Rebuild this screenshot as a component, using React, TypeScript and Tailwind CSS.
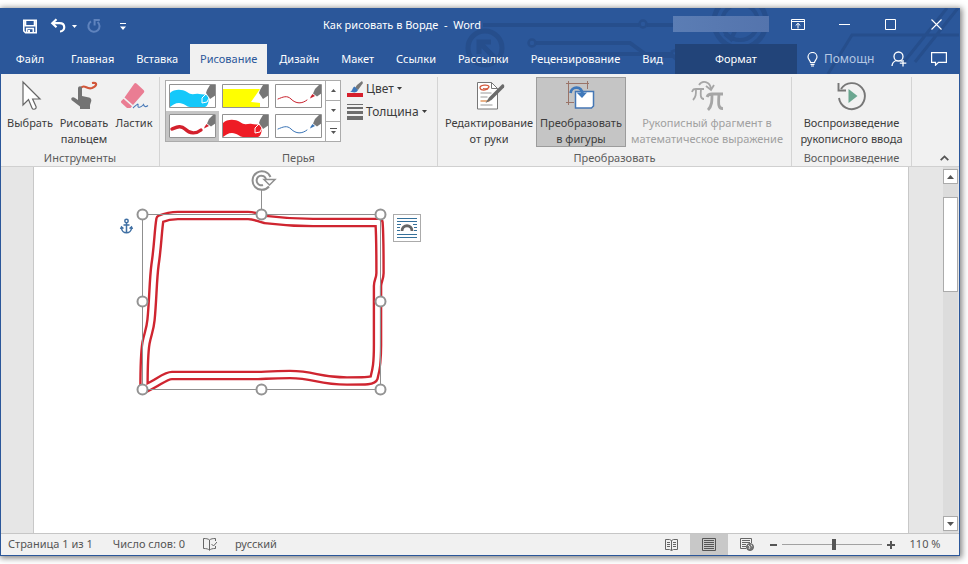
import React, { FC, ReactNode } from "react";

const tabsBefore = ["Главная", "Вставка"];
const tabsAfter = ["Дизайн", "Макет", "Ссылки", "Рассылки", "Рецензирование", "Вид"];

const HeaderArt = () => (
  <svg
    className="pointer-events-none absolute right-0 top-0 h-[66px] w-[500px]"
    viewBox="460 8 500 66"
    fill="none"
    stroke="#264e8c"
    strokeWidth="4"
    aria-hidden="true"
  >
    <path d="M484 25H640M648 25h40M537 43h94l18 13h24M580 54h92l22 20" />
    <circle cx="533" cy="43" r="3.5" strokeWidth="2.5" />
    <circle cx="644" cy="24" r="3.5" strokeWidth="2.5" />
    <circle cx="486" cy="48" r="17" strokeWidth="5" />
    <path d="M480 54V42h12M481 43l15 15" strokeWidth="5" />
    <circle cx="741" cy="22" r="26" strokeWidth="5" />
    <circle cx="741" cy="22" r="18" />
    <path d="M726 34l6 5 4-8" />
    <path d="M672 52c8-4 14 0 18 8l14 14M829 74l24-39h107M905 62l43-54M916 62l43-54" strokeWidth="3" />
  </svg>
);

const Caret = ({ className = "" }: { className?: string }) => (
  <svg className={`h-[3px] w-[5px] shrink-0 ${className}`} viewBox="0 0 5 3" fill="currentColor">
    <path d="M0 0h5L2.5 3z" />
  </svg>
);

const TitleBar: FC = () => (
  <div className="relative flex h-9 shrink-0 items-center text-white">
    <div className="flex w-[130px] shrink-0 items-center pl-[21px]">
      <button aria-label="Сохранить">
        <svg className="size-4" viewBox="0 0 16 16" fill="none" stroke="#fff" strokeWidth="1.6">
          <path d="M1.8 2.3h12.4v12.4H3.5l-1.7-1.7zM3.5 2.5v5.3h9V2.5M4.7 14.5v-4h6.6v4" />
          <path d="M6 12h2v2.5H6z" fill="#fff" stroke="none" />
        </svg>
      </button>
      <button aria-label="Отменить" className="ml-3 flex items-center gap-[6px]">
        <svg className="size-4" viewBox="0 0 16 16" fill="none" stroke="#fff" strokeWidth="2.2">
          <path d="M6.5 1.2 2.3 5.2l4.2 4M2.5 5.2h7c6.5 0 6 8 .5 8.3" />
        </svg>
        <Caret />
      </button>
      <button aria-label="Повторить" className="ml-[9px] text-[#5f83bd]">
        <svg className="size-4" viewBox="0 0 16 16" fill="none" stroke="currentColor" strokeWidth="2">
          <path d="M5 3.4a5.6 5.6 0 1 0 6.6.5M8.6 7.5V2h5.2" />
        </svg>
      </button>
      <button aria-label="Настройка панели" className="ml-[18px]">
        <svg className="h-[7px] w-[6px]" viewBox="0 0 6 7" fill="#fff">
          <path d="M0 0h6v1H0zM0 3.5h6L3 7z" />
        </svg>
      </button>
    </div>
    <div className="min-w-0 flex-1 truncate whitespace-pre pb-[2px] text-center">
      Как рисовать в Ворде  -  Word
    </div>
    <div className="mr-[6px] mb-[5px] h-4 w-24 shrink-0 bg-linear-to-r from-[#5b7db4] to-[#5474ad]" />
    <div className="flex shrink-0 pb-1">
      <button aria-label="Параметры ленты" className="flex h-8 w-[46px] items-center justify-center">
        <svg className="h-[11px] w-[14px]" viewBox="0 0 14 11" fill="none" stroke="#fff">
          <path d="M.5.5h13v10H.5zM.5 2.5h13M7 9.500V4.500M4.700 6.500 7 4.300l2.300 2.200" />
        </svg>
      </button>
      <button aria-label="Свернуть" className="flex h-8 w-[46px] items-center justify-center">
        <svg className="h-[11px] w-[11px]" viewBox="0 0 11 11" stroke="#fff"><path d="M0 5.500h11" /></svg>
      </button>
      <button aria-label="Развернуть" className="flex h-8 w-[46px] items-center justify-center">
        <svg className="h-[11px] w-[11px]" viewBox="0 0 11 11" fill="none" stroke="#fff"><path d="M.5.5h10v10H.5z" /></svg>
      </button>
      <button aria-label="Закрыть" className="flex h-8 w-[46px] items-center justify-center">
        <svg className="h-[11px] w-[11px]" viewBox="0 0 11 11" stroke="#fff" strokeWidth="1.1"><path d="m.5.5 10 10M10.500.500l-10 10" /></svg>
      </button>
    </div>
  </div>
);

const Tabs: FC = () => (
  <div className="relative flex h-[30px] shrink-0 items-stretch gap-[2px] text-white">
    <button className="w-[58px] shrink-0">Файл</button>
    {tabsBefore.map((t) => (
      <button key={t} className="shrink-0 px-[10px]">{t}</button>
    ))}
    <button className="shrink-0 bg-[#f1f1f1] px-[10px] text-[#2b579a]">Рисование</button>
    {tabsAfter.map((t) => (
      <button key={t} className="shrink-0 px-[10px]">{t}</button>
    ))}
    <button className="w-[122px] shrink-0 bg-[#224479]">Формат</button>
    <div className="flex min-w-0 flex-1 items-center pl-2 pr-3">
      <button className="flex items-center gap-[6px] text-xs text-[#b5c7e3]">
        <svg className="h-[15px] w-[11px]" viewBox="0 0 11 15" fill="none" stroke="#fff" strokeWidth="1.2">
          <path d="M3.500 10.500C3.500 8.500 1 7.500 1 5a4.500 4.500 0 0 1 9 0c0 2.500-2.500 3.500-2.500 5.500zM3.500 12.300h4M4 14h3" />
        </svg>
        Помощн
      </button>
      <button aria-label="Общий доступ" className="ml-auto">
        <svg className="h-4 w-4" viewBox="0 0 16 16" fill="none" stroke="#fff" strokeWidth="1.3">
          <circle cx="7.500" cy="5.500" r="4.500" />
          <path d="M1 15c.2-3 2-4.800 4.300-5.500M9.500 9.500l1.500 1M12 9v6.500M8.800 12.200h6.500" />
        </svg>
      </button>
      <button aria-label="Примечания" className="ml-6">
        <svg className="h-[14px] w-4" viewBox="0 0 16 14" fill="none" stroke="#fff" strokeWidth="1.2">
          <path d="M.6.600h14.800v9.800H7.500l-3 2.800v-2.800H.600z" />
        </svg>
      </button>
    </div>
  </div>
);

const ToolButton: FC<{
  icon: ReactNode;
  lines: string[];
  pressed?: boolean;
  disabled?: boolean;
  className: string;
}> = ({ icon, lines, pressed, disabled, className }) => (
  <button
    disabled={disabled}
    aria-pressed={pressed}
    className={`flex h-[70px] shrink-0 flex-col items-center border whitespace-nowrap leading-4 ${className} ${
      pressed ? "border-[#9c9c9c] bg-[#c5c5c5]" : "border-transparent"
    } ${disabled ? "text-[#a0a0a0]" : "text-[#3c3c3c]"}`}
  >
    <span className="mt-[2px] mb-[3px] flex h-8 shrink-0 items-center">{icon}</span>
    {lines.map((l) => (
      <span key={l}>{l}</span>
    ))}
  </button>
);

const Group: FC<{ label: string; className: string; children: ReactNode }> = ({ label, className, children }) => (
  <section className={`flex shrink-0 flex-col ${className}`}>
    <div className="flex h-[73px] border-r border-[#d4d4d4]">{children}</div>
    <div className="h-4 border-r border-[#d4d4d4] text-center leading-4 text-[#5c5c5c]">{label}</div>
  </section>
);

const SelectIcon = () => (
  <svg className="h-8 w-7" viewBox="-1 0 28 32" fill="#fff" stroke="#666" strokeWidth="1.2">
    <path d="M6 2v23l5.500-5.500L15 28c1 2.300 5 1 4-1.500L15.600 19H23z" />
  </svg>
);

const FingerIcon = () => (
  <svg className="h-8 w-8" viewBox="-2 0 32 32" fill="none">
    <path d="M10 9c5-6 6 1 12-1 5-2 6-6 0-5" stroke="#d2573a" strokeWidth="2.200" />
    <path d="M8 8.500c0-3 4-3 4 0v7.500l7 1.500c2 .5 2.500 2 2.300 3.500L20 25v4H10v-2.500L1.500 20c-1-2.500 1.500-3.500 3.500-2l3 2z" fill="#737373" />
  </svg>
);

const EraserIcon = () => (
  <svg className="h-8 w-8" viewBox="0 0 32 32">
    <path d="m18.500 3.500 7 6.500c1 1 1 2 0 3L15 25 6.500 17.500 16 4c1-1.300 1.500-1.400 2.500-.5z" fill="#ea7d93" />
    <path d="m5.500 18.800 8.500 7.500-1.500 1.700H9l-5.500-5c-.7-.7-.7-1.500 0-2.200z" fill="#ea7d93" />
    <path d="M15 28c3.500-3 5.500-5.500 5-2.500s3 2 5.500-1c.5 2 2 3 4.500 1" fill="none" stroke="#4a7ab8" strokeWidth="1.100" />
  </svg>
);

const EditInkIcon = () => (
  <svg className="h-[30px] w-8" viewBox="-2 0 32 30" fill="none">
    <path d="M2.500 1.500h14l6 6V28h-20z" fill="#fff" stroke="#777" />
    <path d="M16.500 1.500v6h6" stroke="#777" />
    <path d="M13 8c-4 2-8 1-8-1.500s8-3.500 9-1c0 2-3 3-6 2" stroke="#d2573a" strokeWidth="1.300" />
    <path d="M5.500 12h11M5.500 16h7M5.500 24h12" stroke="#999" />
    <path d="M5.500 20h9" stroke="#e39a62" strokeWidth="1.500" />
    <path d="m27 3.500-13 13-3.500 5.500 6-3L29 6.500c1-2-.5-4-2-3z" fill="#6b6b6b" />
  </svg>
);

const ConvertShapesIcon = () => (
  <svg className="h-8 w-8" viewBox="2 0 32 32" fill="none">
    <path d="M5.500 1v24M24.500 1v8M3 3.500h23M3 22.500h8" stroke="#9a7468" />
    <path d="M12.500 11.500h18v14.500l-2 2h-16z" fill="#fff" stroke="#4577b5" strokeWidth="1.500" />
    <path d="M7.500 13c1-7 11-7.500 12 1" stroke="#3f78ba" strokeWidth="2.800" />
    <path d="M13.500 12.500h10.500L19 18z" fill="#3f78ba" />
  </svg>
);

const PiIcon = () => (
  <svg className="h-8 w-8" viewBox="0 0 32 32" fill="none" stroke="#a6a6a6">
    <path d="M1 12c1-3 2-3 4-3h8M5 9c0 5 0 8-3 11M10 9c-.5 5-1 10 3 10" strokeWidth="1.800" />
    <path d="M16 17c1-3 3-3 5-3h11M21 14c0 7 0 12-4 16M28 14c-.5 8-1.500 15 4 14.500" strokeWidth="2.800" />
    <path d="M8 5c3-5 11-4 12 4M15 6l5 4 3-5" strokeWidth="1.800" />
  </svg>
);

const ReplayIcon = () => (
  <svg className="h-8 w-8" viewBox="1 0 32 32" fill="none">
    <path d="M6 9A13 13 0 1 1 4 18" stroke="#777" strokeWidth="1.900" />
    <path d="M3.500 3v7.500H11" stroke="#777" strokeWidth="1.900" />
    <path d="M13.500 9v14l9-7z" fill="#6ba690" />
  </svg>
);

type Pen = { name: string; kind: "wide" | "marker" | "line"; color: string; width?: number; selected?: boolean };

const pens: Pen[] = [
  { name: "Голубое перо", kind: "wide", color: "#14c8fa" },
  { name: "Жёлтый маркер", kind: "marker", color: "#ffff00" },
  { name: "Тонкое красное перо", kind: "line", color: "#c8202c", width: 1 },
  { name: "Красное перо", kind: "line", color: "#d3202c", width: 3.4, selected: true },
  { name: "Широкое красное перо", kind: "wide", color: "#ee1c25" },
  { name: "Синее перо", kind: "line", color: "#3973b5", width: 1 },
];

const PenPicture = ({ pen }: { pen: Pen }) => (
  <svg className="h-6 w-[47px] bg-white" viewBox="0 0 47 24" fill="none">
    {pen.kind === "wide" && (
      <path d="M1 9c4-4 12-4 17-1 5 4 8 1 12 2l10 1c0 7-1 11-4 12h-15c-3 0-6-4-11-4-4 0-6 2-9 4z" fill={pen.color} />
    )}
    {pen.kind === "marker" && <path d="M1 5h37l-9 13 9 1v4H1z" fill={pen.color} />}
    {pen.kind === "line" && (
      <path d="M3 15c5-2 9-4 13 0 5 5 11 5 16 1" stroke={pen.color} strokeWidth={pen.width} strokeLinecap="round" />
    )}
    {pen.kind === "line" ? (
      <>
        <path d="M47 1v8l-5 3.500-4-3L40 5l4-4z" fill="#777" />
        <path d="m37.500 10 2.500 2-3 1.500-2 1 .8-2z" fill={pen.color} />
      </>
    ) : (
      <>
        <path d="M47 1v10l-6 4-4-6 1-3 3-5z" fill="#777" />
        {pen.kind === "wide" && <path d="m37 10 3 4-2 4-5 1v-5z" fill={pen.color} stroke="#fff" />}
      </>
    )}
    <path d="M.5.500h46v23H.500z" stroke="#929292" />
  </svg>
);

const Ribbon: FC = () => (
  <div className="flex h-[93px] shrink-0 overflow-hidden border-b border-[#d0d0d0] bg-[#f1f1f1] pt-[3px]">
    <Group label="Инструменты" className="w-[159px]">
      <div className="flex w-full justify-center gap-1">
        <ToolButton className="w-[50px]" icon={<SelectIcon />} lines={["Выбрать"]} />
        <ToolButton className="w-[50px]" icon={<FingerIcon />} lines={["Рисовать", "пальцем"]} />
        <ToolButton className="w-[42px]" icon={<EraserIcon />} lines={["Ластик"]} />
      </div>
    </Group>
    <Group label="Перья" className="w-[278px]">
      <div className="mt-[3px] ml-[5px] flex h-[62px] border border-[#ababab] bg-white">
        <div className="grid grid-cols-3">
          {pens.map((pen) => (
            <button
              key={pen.name}
              aria-label={pen.name}
              aria-pressed={pen.selected}
              className={`flex h-[30px] w-[53px] items-center justify-center ${pen.selected ? "bg-[#c5c5c5]" : ""}`}
            >
              <PenPicture pen={pen} />
            </button>
          ))}
        </div>
        <div className="flex w-[15px] flex-col divide-y divide-[#ababab] border-l border-[#ababab] text-[#555]">
          <button aria-label="Вверх" className="flex flex-1 items-center justify-center"><Caret className="rotate-180" /></button>
          <button aria-label="Вниз" className="flex flex-1 items-center justify-center"><Caret /></button>
          <button aria-label="Все перья" className="flex flex-1 flex-col items-center justify-center gap-[2px]">
            <span className="h-px w-[7px] bg-current" />
            <Caret />
          </button>
        </div>
      </div>
      <div className="flex flex-col pl-[6px] text-xs text-[#3c3c3c]">
        <button className="flex h-[23px] items-center gap-[3px]">
          <svg className="h-4 w-4" viewBox="0 0 16 16">
            <path d="m15 0-5 4-2 3 3 2 5-7z" fill="#777" />
            <path d="m7.500 5.500 3.500 3.500c-2 4-6 2-8 1.500 3-.5 2-4 4.500-5z" fill="#3e77ba" />
            <path d="M0 12h16v4H0z" fill="#d61f2c" />
          </svg>
          Цвет
          <Caret />
        </button>
        <button className="flex h-[23px] items-center gap-[3px]">
          <svg className="h-4 w-4" viewBox="0 0 16 16" fill="#6d6d6d">
            <path d="M0 0h16v1H0zM0 3h16v2H0zM0 7h16v3H0zM0 12h16v4H0z" />
          </svg>
          Толщина
          <Caret />
        </button>
      </div>
    </Group>
    <Group label="Преобразовать" className="w-[354px]">
      <div className="flex pl-[6px]">
        <ToolButton className="w-[90px]" icon={<EditInkIcon />} lines={["Редактирование", "от руки"]} />
        <ToolButton pressed className="mx-[2px] w-[90px]" icon={<ConvertShapesIcon />} lines={["Преобразовать", "в фигуры"]} />
        <ToolButton disabled className="w-[158px]" icon={<PiIcon />} lines={["Рукописный фрагмент в", "математическое выражение"]} />
      </div>
    </Group>
    <Group label="Воспроизведение" className="w-[120px]">
      <ToolButton className="w-full" icon={<ReplayIcon />} lines={["Воспроизведение", "рукописного ввода"]} />
    </Group>
    <button aria-label="Свернуть ленту" className="mt-auto mr-[10px] mb-[5px] ml-auto">
      <svg className="h-[6px] w-[9px]" viewBox="0 0 9 6" fill="none" stroke="#555" strokeWidth="1.800">
        <path d="m.7 5.200 3.800-3.800 3.800 3.800" />
      </svg>
    </button>
  </div>
);

const outline =
  "M144 388 C144 370 144 355 146 343 C148 333 150 330 151 320 C153 300 153 280 155 265 C158 245 158 231 160 219 C165 217 170 215.500 178 215.500 H248 C255 215.500 258 218 265 219.500 C285 222 300 222.500 313 222.500 H379 C380 235 380 260 380 273 C380 279 377.500 281 377.500 286 V345 C377.500 365 376 370 374 378 C373 381 367 381 347 381 C318 381 315 374.500 290 374.500 C270 374.500 265 375.500 258 375.500 H172 C165 375.500 158 383 146 388 Z";

const handles = [
  [142.5, 214.5], [261.5, 214.5], [380.5, 214.5],
  [142.5, 301.5], [380.5, 301.5],
  [142.5, 389.5], [261.5, 389.5], [380.5, 389.5],
];

const Drawing = () => (
  <svg
    className="absolute top-0 left-[76px] h-[240px] w-[330px]"
    viewBox="110 167 330 240"
    fill="none"
    role="img"
    aria-label="Нарисованный прямоугольник"
  >
    <path d={outline} stroke="#cf2530" strokeWidth="9.600" strokeLinejoin="round" />
    <path d={outline} stroke="#fff" strokeWidth="4.800" strokeLinejoin="round" />
    <path d="M142.500 214.500h238v175h-238zM261.500 190v25" stroke="#8f8f8f" />
    {handles.map(([x, y]) => (
      <circle key={`${x}-${y}`} cx={x} cy={y} r="5" fill="#fff" stroke="#939393" strokeWidth="2" />
    ))}
    {/* rotation handle */}
    <g stroke="#8f8f8f">
      <path d="M270.500 177a9.300 9.300 0 1 0-1.500 9.500" strokeWidth="2" />
      <path d="M266 179a4.800 4.800 0 1 0-3 6" strokeWidth="2" />
      <path d="M264 179.500h11l-5.500 5.500z" fill="#fff" strokeWidth="1.500" />
    </g>
    {/* anchor */}
    <g stroke="#3f6fa3" strokeWidth="1.500">
      <circle cx="126.500" cy="221" r="1.700" />
      <path d="M126.500 223v9M123.500 225h6M121.500 227.500c0 7 10 7 10 0M120.500 229l1-2 2 1.500M132.500 229l-1-2-2 1.500" />
    </g>
  </svg>
);

const Workspace: FC = () => (
  <div className="flex min-h-0 flex-1 bg-[#e6e6e6]">
    <div className="relative mr-[34px] ml-8 flex-1 border-x border-[#c8c8c8] bg-white">
      <Drawing />
      <button
        aria-label="Параметры разметки"
        className="absolute top-[47px] left-[359px] flex size-7 items-center justify-center border border-[#ababab] bg-white"
      >
        <svg className="h-5 w-5" viewBox="0 0 20 20" fill="none" stroke="#35709a">
          <path d="M0 .500h20M0 3.500h20M0 16.500h20M0 19.500h20M0 6.500h4M16 6.500h4M0 9.500h3M17 9.500h3M0 12.500h3M17 12.500h3" />
          <path d="M5 13c0-7 10-7 10 0" stroke="#666" strokeWidth="2.800" />
        </svg>
      </button>
    </div>
    <div className="flex w-[15px] shrink-0 flex-col bg-[#dcdcdc] pt-[2px] pb-[2px] text-[#555]">
      <button aria-label="Прокрутить вверх" className="flex h-[15px] items-center justify-center border border-[#ababab] bg-white">
        <svg className="h-1 w-[7px]" viewBox="0 0 7 4" fill="currentColor"><path d="M0 4h7L3.500 0z" /></svg>
      </button>
      <div className="mt-[13px] h-[95px] border border-[#ababab] bg-white" />
      <button aria-label="Прокрутить вниз" className="mt-auto flex h-[15px] items-center justify-center border border-[#ababab] bg-white">
        <svg className="h-1 w-[7px]" viewBox="0 0 7 4" fill="currentColor"><path d="M0 0h7L3.500 4z" /></svg>
      </button>
    </div>
    <div className="w-px shrink-0" />
  </div>
);

const StatusBar: FC = () => (
  <div className="flex h-[22px] shrink-0 items-stretch border-t border-[#c6c6c6] bg-[#f1f1f1] text-[#555]">
    <div className="flex items-center gap-5 pl-[7px]">
      <button>Страница 1 из 1</button>
      <button>Число слов: 0</button>
      <button aria-label="Правописание" className="-ml-[2px]">
        <svg className="h-[13px] w-[14px]" viewBox="0 0 14 13" fill="none" stroke="#666">
          <path d="M6.500 2C5 .700 3 .500.500.500v10c3 0 5 .5 6 1.800 1-1.300 3-1.800 6-1.800V8M6.500 2v10M6.500 2C8 .700 10 .500 12.500.500V3M8.500 6l2 2 3.500-4" />
        </svg>
      </button>
      <button className="-ml-[2px]">русский</button>
    </div>
    <div className="ml-auto flex items-center">
      <button aria-label="Режим чтения" className="flex h-full w-[38px] items-center justify-center">
        <svg className="h-3 w-[13px]" viewBox="0 0 13 12" fill="none" stroke="#666">
          <path d="M6.500 1.500v10M.500.500h4l2 1 2-1h4v10h-4l-2 1-2-1h-4zM2 3.500h3M2 5.500h3M2 7.500h3M8 3.500h3M8 5.500h3M8 7.500h3" />
        </svg>
      </button>
      <button aria-label="Разметка страницы" aria-pressed="true" className="flex h-full w-[38px] items-center justify-center bg-[#c8c8c8]">
        <svg className="h-[13px] w-[14px]" viewBox="0 0 14 13" fill="none" stroke="#555">
          <path d="M.500.500h13v12H.500zM2 2.500h10M2 4.500h10M2 6.500h10M2 8.500h10M2 10.500h10" />
        </svg>
      </button>
      <button aria-label="Веб-документ" className="flex h-full w-[38px] items-center justify-center">
        <svg className="h-[13px] w-[14px]" viewBox="0 0 14 13" fill="none" stroke="#666">
          <path d="M6 10.500H.500V.500h11V5M2 2.500h8M2 4.500h8M2 6.500h4M2 8.500h4" />
          <circle cx="10" cy="9" r="3.500" fill="#777" />
          <path d="m8 7 2 2-1 2M11 6.500l1 2" stroke="#ddd" />
        </svg>
      </button>
      <button aria-label="Уменьшить" className="ml-1 flex h-full w-[7px] items-center">
        <span className="h-[2px] w-full bg-[#555]" />
      </button>
      <input
        type="range"
        aria-label="Масштаб"
        min={0}
        max={100}
        defaultValue={52}
        className="mx-[5px] h-3 w-[100px] appearance-none bg-linear-to-b from-transparent from-45% via-[#999] via-45% to-transparent to-54% [&::-webkit-slider-thumb]:h-[11px] [&::-webkit-slider-thumb]:w-1 [&::-webkit-slider-thumb]:appearance-none [&::-webkit-slider-thumb]:bg-[#555]"
      />
      <button aria-label="Увеличить" className="flex h-full items-center">
        <svg className="h-2 w-2" viewBox="0 0 8 8" fill="#555"><path d="M3 0h2v3h3v2H5v3H3V5H0V3h3z" /></svg>
      </button>
      <button className="w-16 pr-1 text-center">110 %</button>
    </div>
  </div>
);

const App: FC = () => (
  <div className="h-screen min-h-[400px] bg-white pt-2 pr-2 pb-2 font-['Noto_Sans','Open_Sans',sans-serif] text-[11px]">
    <main className="flex h-full flex-col overflow-hidden border-r border-b border-l border-[#2b579a] shadow-[1px_1px_6px_1px_#00000080]">
      <header className="relative shrink-0 bg-[#2b579a]">
        <HeaderArt />
        <TitleBar />
        <Tabs />
      </header>
      <Ribbon />
      <Workspace />
      <StatusBar />
    </main>
  </div>
);

export default App;
